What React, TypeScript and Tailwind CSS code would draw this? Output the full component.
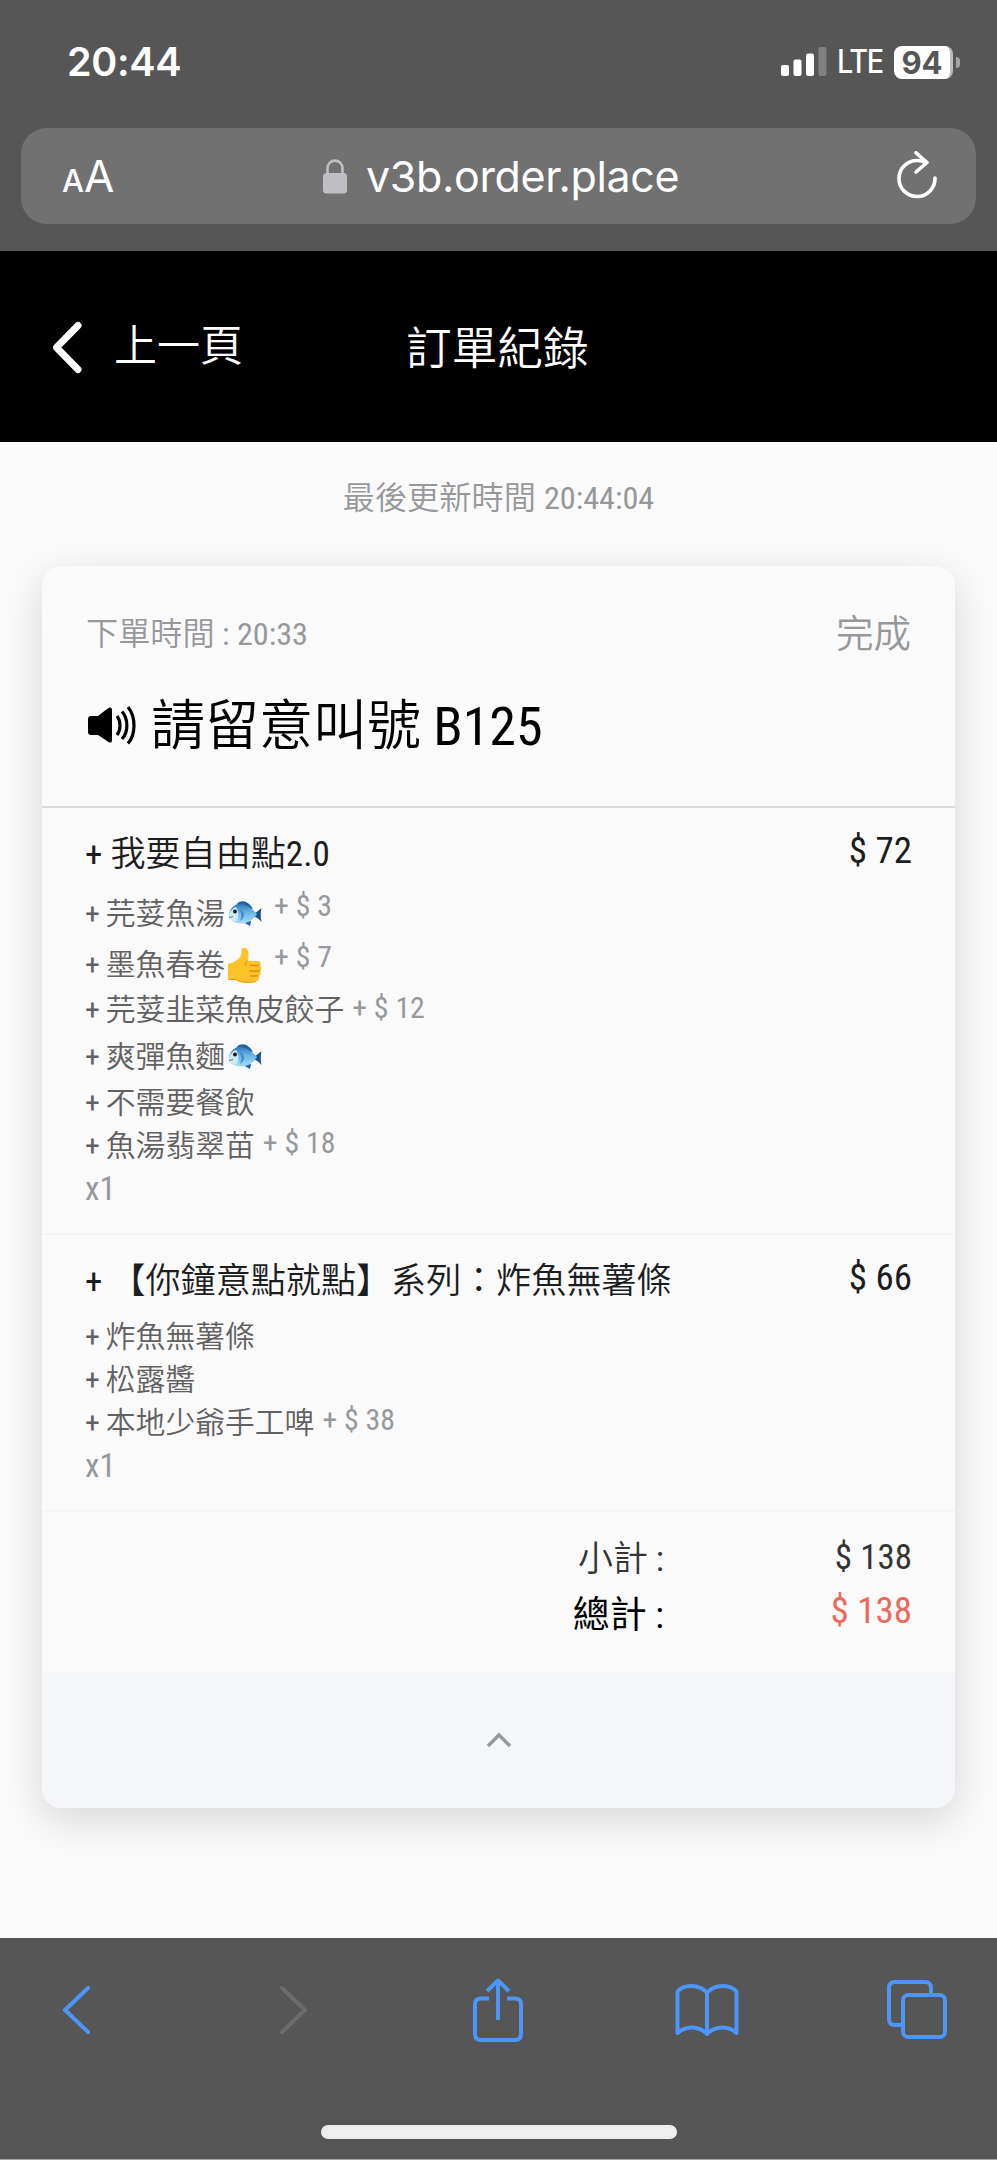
import { clsx } from 'clsx';

type Option = {
  name: string;
  price?: number;
  emoji?: 'fish' | 'thumb';
  row: string;
  priceShift?: string;
};

type OrderItem = {
  title: string;
  version?: string;
  price: number;
  qty: number;
  options: Option[];
};

const ITEMS: OrderItem[] = [
  {
    title: '我要自由點',
    version: '2.0',
    price: 72,
    qty: 1,
    options: [
      { name: '芫荽魚湯', price: 3, emoji: 'fish', row: 'h-[50px] pt-[2px]', priceShift: 'pb-4' },
      { name: '墨魚春卷', price: 7, emoji: 'thumb', row: 'h-[51px] pt-[2px]', priceShift: 'pb-4' },
      { name: '芫荽韭菜魚皮餃子', price: 12, row: 'h-[42px]', priceShift: 'pb-[5px]' },
      { name: '爽彈魚麵', emoji: 'fish', row: 'h-[50px] pt-[2px]' },
      { name: '不需要餐飲', row: 'h-[43px]' },
      { name: '魚湯翡翠苗', price: 18, row: 'h-[43px]', priceShift: 'pb-[5px]' },
    ],
  },
  {
    title: '【你鐘意點就點】系列：炸魚無薯條',
    price: 66,
    qty: 1,
    options: [
      { name: '炸魚無薯條', row: 'h-[43px]' },
      { name: '松露醬', row: 'h-[43px]' },
      { name: '本地少爺手工啤', price: 38, row: 'h-[43px]', priceShift: 'pb-[5px]' },
    ],
  },
];

function FishIcon() {
  return (
    <svg width="34" height="28" viewBox="0 0 34 28" fill="none">
      <defs>
        <linearGradient id="fish-body" x1="0" y1="0" x2="0" y2="1">
          <stop offset="0" stopColor="#2f77b5" />
          <stop offset="0.45" stopColor="#6db6e6" />
          <stop offset="1" stopColor="#a9dcf6" />
        </linearGradient>
      </defs>
      <path d="M9 4C11 0 19 0 23 6L25 9L10 7Z" fill="#24609f" />
      <path d="M13 21L22 26L23 21Z" fill="#24609f" />
      <path d="M25 14C28 13 31 10 33.500 8C32.500 12 32.500 17 33.500 22C31 19 28 17 25 16Z" fill="#1d4f8c" />
      <path d="M.8 15C2 7 8 3 14 4C20 5 25 10 29 14C25 20 19 24 12 23.500C6 23 1 20 .8 15Z" fill="url(#fish-body)" />
      <path d="M1 15C2 11 5 8 8 7C11 11 11 18 8 22C4 21 1 19 1 15Z" fill="#cfe9f5" />
      <path d="M11 9C17 10 18 17 12 21C14 17 14 13 11 9Z" fill="#3f8fcf" />
      <circle cx="7" cy="11.500" r="2" fill="#1b1b1f" />
      <path d="M1 17.500L5 16.500" stroke="#56788c" strokeWidth="1" />
    </svg>
  );
}

function ThumbIcon() {
  return (
    <svg width="34" height="36" viewBox="0 0 34 36" fill="none">
      <path
        d="M0 17C5 16 11 13 13 8C14 5 13 2 15 .8C18 0 20.500 3 20.500 7C20.500 10 20 12 20 14H30C33 14 33.500 17.500 31.500 18.500C34 19.500 34 23 32 24C33.500 25.500 33 28.500 30.500 29C31.500 31 31 34 28 34.500C20 37 11 35 7 32.500H0Z"
        fill="#fcc32a"
      />
      <path d="M22 18.500H31.500M21.500 24H32M22 29H30.500" stroke="#e08f12" strokeWidth="1.300" />
      <path d="M20 14C18 15 17 16.500 17.500 19" stroke="#e9a117" strokeWidth="1.300" />
      <path d="M1 32.500H7C11 35 20 36.500 28 34.500" stroke="#e89a13" strokeWidth="1" />
    </svg>
  );
}

function StatusBar() {
  return (
    <div className="flex h-[128px] items-start justify-between pt-[39px] pr-[37px] pl-[67px] text-white">
      <span className="text-[39.5px] leading-[46px] font-semibold tracking-[-0.3px]">20:44</span>
      <div className="flex h-[46px] items-center">
        <svg className="shrink-0" width="46" height="30" viewBox="0 0 46 30" fill="currentColor">
          <rect x="0" y="18" width="8" height="11" rx="2" />
          <rect x="12.500" y="12.500" width="8" height="16.500" rx="2" />
          <rect x="25" y="6.500" width="8" height="22.500" rx="2" />
          <rect x="37.500" y="0" width="8" height="29" rx="2" opacity="0.25" />
        </svg>
        <span className="ml-[10px] w-[57px] shrink-0 origin-left scale-x-90 text-[32px] leading-none font-medium tracking-[-1.5px]">
          LTE
        </span>
        <span className="flex h-[33px] w-[59px] shrink-0 items-center justify-center rounded-[8px] border-r-[3px] border-[#bdbdbd] bg-white text-[31px] leading-none font-bold text-[#565656]">
          94
        </span>
        <span className="ml-[3px] h-[11px] w-[4px] shrink-0 rounded-r-full bg-[#a5a5a5]" />
      </div>
    </div>
  );
}

function AddressBar() {
  return (
    <div className="mx-[21px] flex h-[96px] items-center rounded-[26px] bg-[#717171] text-white">
      <div className="flex w-[302px] items-baseline pl-[41px] leading-none">
        <span className="text-[31px] font-medium">A</span>
        <span className="text-[44px]">A</span>
      </div>
      <svg width="24" height="35" viewBox="0 0 24 35" fill="none">
        <path d="M4.500 16V9.500C4.500 -1 19.500 -1 19.500 9.500V16" stroke="#c0bfc6" strokeWidth="2.600" />
        <rect x="0" y="14" width="24" height="20.500" rx="3.500" fill="#c0bfc6" />
      </svg>
      <span className="ml-[19px] flex-1 text-[43px] leading-none tracking-[-0.35px]">v3b.order.place</span>
      <svg className="mr-[38px]" width="42" height="50" viewBox="0 0 42 50" fill="none" stroke="currentColor" strokeWidth="3.600" strokeLinecap="round" strokeLinejoin="round">
        <path d="M39 27A18 18 0 1 1 21 9.500Q26 9.500 30 11.500" />
        <path d="M20 1.800L31 11.500L20 21" />
      </svg>
    </div>
  );
}

function PageHeader() {
  return (
    <header className="flex h-[191px] items-center bg-black text-white">
      <svg className="ml-[50px]" width="34" height="54" viewBox="0 0 34 54" fill="none" stroke="currentColor" strokeWidth="7" strokeLinecap="round" strokeLinejoin="round">
        <path d="M28 5.500L6.500 27.500L28 49.500" />
      </svg>
      <span className="ml-[30px] w-[292px] text-[43px] leading-none">上一頁</span>
      <h1 className="pt-1.5 text-[45.7px] leading-none">訂單紀錄</h1>
    </header>
  );
}

function ItemBlock({ item }: { item: OrderItem }) {
  return (
    <section className="border-b-2 border-[#f5f5f6] pr-[43px] pb-[23px] pl-[43px]">
      <div className="flex h-[80px] items-center justify-between pt-[14px] leading-none text-[#1c1d1f]">
        <h3 className="text-[35.1px]">
          <span className="mr-2 font-normal">+</span>
          {item.title}
          {item.version && <span className="font-normal">{item.version}</span>}
        </h3>
        <span className="pb-[10px] text-[37px] font-normal">$ {item.price}</span>
      </div>
      <ul className="text-[29.8px] leading-none text-[#616161]">
        {item.options.map((opt) => (
          <li key={opt.name} className={clsx('flex items-center', opt.row)}>
            <span className="mr-1.5 font-normal">+</span>
            <span>{opt.name}</span>
            {opt.emoji && (
              <span className="mr-1 ml-[3px]">{opt.emoji === 'fish' ? <FishIcon /> : <ThumbIcon />}</span>
            )}
            {opt.price !== undefined && (
              <span className={clsx('ml-2 font-normal text-[#96989b]', opt.priceShift)}>+ $ {opt.price}</span>
            )}
          </li>
        ))}
      </ul>
      <p className="flex h-[43px] items-center text-[33px] leading-none font-normal text-[#96989b]">x{item.qty}</p>
    </section>
  );
}

function OrderCard() {
  return (
    <article className="mx-[42px] overflow-hidden rounded-[20px] bg-[#fafafa] shadow-[0_12px_40px_rgba(0,0,0,0.14)]">
      <div className="h-[242px] border-b-2 border-[#d9dadc] pt-[46px] pr-[44px] pl-11">
        <div className="flex h-[44px] items-center justify-between leading-none text-[#96989b]">
          <span className="text-[32.2px]">
            下單時間 <span className="font-normal">: 20:33</span>
          </span>
          <span className="pt-0.5 text-[37.5px]">完成</span>
        </div>
        <div className="mt-[44px] flex h-[54px] items-center text-black">
          <svg className="mb-1 ml-[2px]" width="48" height="40" viewBox="0 0 48 40" fill="none">
            <path d="M3 11H10L19 4C22 1.500 24 2 24 5V35C24 38 22 38.500 19 36L10 30H3C1 30 0 29 0 27V14C0 12 1 11 3 11Z" fill="currentColor" />
            <path d="M29 11C33 16 33 25 29 30M34 6.500C40.500 14 40.500 27 34 34M40 2C48 12 48 29 40 38.500" stroke="currentColor" strokeWidth="3.200" />
          </svg>
          <h2 className="ml-[15px] text-[54px] leading-none">
            請留意叫號 <span className="font-normal">B125</span>
          </h2>
        </div>
      </div>

      {ITEMS.map((item) => (
        <ItemBlock key={item.title} item={item} />
      ))}

      <div className="h-[160px] pt-[20px] pr-[43px] leading-none">
        <div className="flex h-[54px] items-center justify-end text-[35px] text-[#333436]">
          <span>
            小計 <span className="font-normal">:</span>
          </span>
          <span className="w-[248px] pb-1 text-right font-normal">$ 138</span>
        </div>
        <div className="flex h-[56px] items-center justify-end pt-0.5 text-[37px] font-normal text-black">
          <span>總計 :</span>
          <span className="w-[248px] pb-2.5 text-right text-[#ea6a5c]">$ 138</span>
        </div>
      </div>

      <div className="flex h-[136px] items-center justify-center bg-[#f4f6fa]">
        <svg width="26" height="18" viewBox="0 0 26 18" fill="none" stroke="#96989b" strokeWidth="3.500">
          <path d="M2 15L13 4L24 15" />
        </svg>
      </div>
    </article>
  );
}

function Toolbar() {
  return (
    <footer className="h-[222px] border-b border-[#a8a8a8] bg-[#565656]">
      <div className="flex h-[144px] items-center pl-[61px] text-[#4b96f8]">
        <svg width="31" height="52" viewBox="0 0 31 52" fill="none" stroke="currentColor" strokeWidth="4" strokeLinecap="round" strokeLinejoin="round">
          <path d="M27 4L4 26L27 48" />
        </svg>
        <svg className="ml-[186px] text-[#6c6c6c]" width="31" height="52" viewBox="0 0 31 52" fill="none" stroke="currentColor" strokeWidth="4" strokeLinecap="round" strokeLinejoin="round">
          <path d="M4 4L27 26L4 48" />
        </svg>
        <svg className="ml-[163px]" width="52" height="66" viewBox="0 0 52 66" fill="none" stroke="currentColor" strokeWidth="4" strokeLinejoin="round">
          <path d="M17 21.500H9Q3 21.500 3 27.500V57Q3 63 9 63H43Q49 63 49 57V27.500Q49 21.500 43 21.500H35" />
          <path d="M26 43V4M15 14L26 3.500L37 14" />
        </svg>
        <svg className="ml-[151px]" width="64" height="54" viewBox="0 0 64 54" fill="none" stroke="currentColor" strokeWidth="4" strokeLinejoin="round">
          <path d="M32 9.500C24 1 9 1 2.500 8.500V50C10 43 23 42 32 51C41 42 54 43 61.500 50V8.500C55 1 40 1 32 9.500ZM32 9.500V51" />
        </svg>
        <svg className="ml-[147px]" width="62" height="62" viewBox="0 0 62 62" fill="none" stroke="currentColor" strokeWidth="4">
          <rect x="17" y="16" width="42" height="42" rx="5" />
          <path d="M17 46H9Q3 46 3 40V9Q3 3 9 3H39Q45 3 45 9V16" />
        </svg>
      </div>
      <div className="mx-auto mt-[43px] h-[14px] w-[356px] rounded-full bg-[#eeeeee]" />
    </footer>
  );
}

export default function App() {
  return (
    <div className="flex h-[2160px] w-[997px] flex-col overflow-hidden bg-[#fafafa] font-['Inter','Liberation_Sans',sans-serif]">
      <div className="h-[251px] bg-[#565656]">
        <StatusBar />
        <AddressBar />
      </div>
      <main className="flex-1 font-['Roboto_Condensed','Roboto','Noto_Sans_CJK_TC',sans-serif] font-[350] font-stretch-condensed">
        <PageHeader />
        <p className="flex h-[124px] items-center justify-center gap-2 pb-3 text-[32.2px] leading-none text-[#96989b]">
          最後更新時間 <span className="font-normal">20:44:04</span>
        </p>
        <OrderCard />
      </main>
      <Toolbar />
    </div>
  );
}
